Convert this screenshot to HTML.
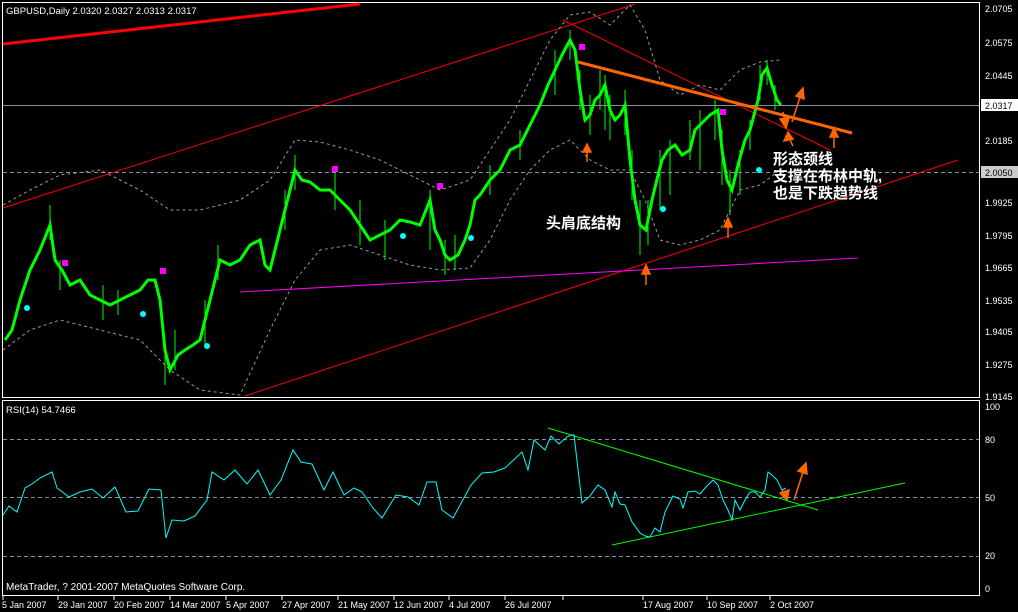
<!DOCTYPE html><html><head><meta charset="utf-8"><style>
body{margin:0;background:#000;width:1018px;height:612px;overflow:hidden}
svg{display:block}
text{font-family:"Liberation Sans",sans-serif;font-size:9px;fill:#fff}
.t{font-size:9.5px}
.m{font-size:10px}
.cn{font-family:"Liberation Sans","Noto Sans CJK SC",sans-serif;font-size:15px;font-weight:bold;fill:#fff}
</style></head><body>
<svg width="1018" height="612" viewBox="0 0 1018 612">
<rect width="1018" height="612" fill="#000"/>
<rect x="2.5" y="2.5" width="977" height="395" fill="none" stroke="#fff"/>
<rect x="2.5" y="400.5" width="977" height="195" fill="none" stroke="#fff"/>
<line x1="3" y1="105.5" x2="979" y2="105.5" stroke="#8090a8"/>
<line x1="3" y1="172.5" x2="979" y2="172.5" stroke="#8090a8" stroke-dasharray="4,3"/>
<line x1="3" y1="44" x2="360" y2="4" stroke="#f00" stroke-width="3"/>
<line x1="3" y1="208" x2="635" y2="4" stroke="#f00"/>
<line x1="245" y1="396" x2="958" y2="160" stroke="#f00"/>
<line x1="563" y1="20" x2="830" y2="150" stroke="#f00"/>
<line x1="240" y1="292" x2="858" y2="258" stroke="#f0f"/>
<polyline fill="none" stroke="#999" stroke-dasharray="3,3" points="3,205 30,190 60,175 100,170 140,190 170,210 200,210 240,200 270,180 295,140 320,142 350,150 380,160 410,175 440,190 470,180 490,150 510,120 530,80 550,40 570,15 590,12 610,25 630,5 645,30 660,80 680,95 700,85 720,90 740,70 760,62 780,60"/>
<polyline fill="none" stroke="#999" stroke-dasharray="3,3" points="3,350 30,330 60,320 100,330 140,340 170,370 200,390 240,395 270,330 295,280 320,250 350,245 380,255 410,265 440,270 470,268 490,240 510,200 530,170 550,150 570,140 590,160 610,170 630,170 645,200 660,240 680,245 700,240 720,230 740,190 760,185 780,170"/>
<g stroke="#00ff00" fill="none">
<polyline stroke-width="3" points="5,340 12,330 20,300 30,270 40,250 50,225 55,260 62,270 70,285 80,280 90,295 100,300 110,305 120,300 130,295 140,290 148,280 155,280 160,300 165,350 170,370 178,355 185,350 193,345 200,340 205,320 210,300 215,280 220,260 230,265 240,260 250,245 260,240 265,265 270,270 275,250 280,230 285,210 290,190 295,170 302,180 310,182 320,190 330,190 340,200 350,210 360,225 370,240 380,235 390,230 400,220 410,222 420,225 430,200 435,230 440,240 445,255 450,260 458,255 465,240 470,225 475,200 480,195 490,180 500,170 510,150 520,145 530,125 540,105 548,85 555,70 562,55 570,40 575,50 580,90 585,120 590,115 595,100 600,95 605,85 610,110 615,120 620,115 625,105 630,160 635,200 640,225 646,230 652,200 658,175 662,160 668,150 675,145 682,155 690,150 695,130 700,125 710,115 718,110 722,150 727,180 732,190 738,165 745,140 750,130 758,100 762,75 767,68 772,85 777,100 781,105"/>
<path stroke-width="1" d="M50,205V240M60,260V290M103,285V320M118,290V315M165,340V385M175,330V370M205,300V345M218,245V280M285,190V230M295,155V190M335,170V210M360,200V245M385,220V260M430,190V250M445,240V275M455,235V270M490,165V195M520,130V160M555,50V95M570,30V60M580,70V110M590,95V135M600,70V110M605,75V130M610,95V140M625,90V135M632,150V200M640,200V255M648,200V245M660,150V210M670,140V195M690,120V160M700,110V170M715,100V140M722,130V185M730,170V215M740,150V195M750,120V150M760,65V100M767,60V85M775,85V110"/>
</g>
<g fill="#f0f"><rect x="62" y="260" width="6" height="6"/><rect x="160" y="268" width="6" height="6"/><rect x="332" y="166" width="6" height="6"/><rect x="437" y="183" width="6" height="6"/><rect x="579" y="44" width="6" height="6"/><rect x="720" y="109" width="6" height="6"/></g>
<g fill="#0ff"><circle cx="27" cy="308" r="3"/><circle cx="143" cy="314" r="3"/><circle cx="207" cy="346" r="3"/><circle cx="403" cy="236" r="3"/><circle cx="471" cy="238" r="3"/><circle cx="663" cy="209" r="3"/><circle cx="759" cy="170" r="3"/></g>
<line x1="578" y1="62" x2="852" y2="133" stroke="#ff6600" stroke-width="3"/>
<g stroke="#ff6600" fill="#ff6600" stroke-width="1.5">
<line x1="587" y1="162" x2="587" y2="150"/><path d="M583,152L587,144L591,152Z"/>
<line x1="646" y1="285" x2="646" y2="272"/><path d="M642,274L646,265L650,274Z"/>
<line x1="728" y1="238" x2="728" y2="225"/><path d="M724,227L728,218L732,227Z"/>
<line x1="834" y1="148" x2="834" y2="135"/><path d="M830,137L834,128L838,137Z"/>
<line x1="783" y1="112" x2="785" y2="122"/><path d="M780,119L786,128L789,118Z"/>
<line x1="793" y1="146" x2="789" y2="138"/><path d="M784,141L788,132L793,139Z"/>
<line x1="792" y1="122" x2="800" y2="97"/><path d="M796,96L803,88L804,99Z"/>
<line x1="787" y1="500" x2="782" y2="490"/><path d="M780,493L787,500L789,490Z"/>
<line x1="794" y1="500" x2="803" y2="472"/><path d="M798,471L806,463L807,474Z"/>
</g>
<text class="cn" x="546" y="228">头肩底结构</text>
<text class="cn" x="773" y="164">形态颈线</text>
<text class="cn" x="773" y="181">支撑在布林中轨,</text>
<text class="cn" x="773" y="198">也是下跌趋势线</text>
<text class="t" x="6" y="14">GBPUSD,Daily  2.0320 2.0327 2.0313 2.0317</text>
<g>
<text x="985" y="12">2.0705</text><text x="985" y="46">2.0575</text><text x="985" y="79">2.0445</text>
<text x="985" y="144">2.0185</text><text x="985" y="206">1.9925</text><text x="985" y="239">1.9795</text>
<text x="985" y="271">1.9665</text><text x="985" y="304">1.9535</text><text x="985" y="335">1.9405</text>
<text x="985" y="368">1.9275</text><text x="985" y="400">1.9145</text>
<rect x="981" y="99" width="37" height="12" fill="#fff"/><text x="985" y="109" style="fill:#000">2.0317</text>
<rect x="981" y="166" width="37" height="12" fill="#ccc"/><text x="985" y="176" style="fill:#000">2.0050</text>
</g>
<g stroke="#8090a8" stroke-dasharray="4,3"><line x1="3" y1="439.5" x2="979" y2="439.5"/><line x1="3" y1="497.5" x2="979" y2="497.5"/><line x1="3" y1="556.5" x2="979" y2="556.5"/></g>
<text class="t" x="6" y="413">RSI(14) 54.7466</text>
<text x="985" y="410">100</text><text x="985" y="443">80</text><text x="985" y="501">50</text><text x="985" y="559">20</text><text x="985" y="592">0</text>
<line x1="548" y1="428" x2="818" y2="510" stroke="#00ff00"/>
<line x1="612" y1="545" x2="905" y2="483" stroke="#00ff00"/>
<polyline fill="none" stroke="#00ffff" points="3,515 9,506 17,512 25,488 32,484 40,478 52,472 57,488 69,497 80,492 92,489 103,498 115,487 126,512 138,511 149,489 161,490 166,538 172,520 184,521 195,516 207,500 212,472 224,480 235,470 247,484 258,470 270,495 281,480 293,450 301,462 312,464 324,490 333,472 344,495 354,488 362,492 373,508 382,518 396,495 408,497 419,505 427,482 436,482 442,510 453,518 471,485 482,473 494,472 505,468 522,452 528,470 534,440 545,450 551,436 559,444 567,437 571,435 574,435 582,503 590,496 598,485 605,490 612,507 615,492 620,504 625,505 632,522 640,533 645,536 650,537 655,528 660,532 665,512 673,496 680,499 683,508 688,492 695,491 700,494 705,488 710,483 713,480 718,485 723,500 728,510 732,520 735,500 740,510 745,500 750,492 755,492 760,497 765,490 768,472 772,475 777,480 782,490 786,488"/>
<text class="m" x="6" y="590">MetaTrader, ? 2001-2007 MetaQuotes Software Corp.</text>
<g stroke="#fff"><path d="M3,596v4M58,596v4M114,596v4M170,596v4M226,596v4M282,596v4M338,596v4M394,596v4M449,596v4M505,596v4M563,596v4M643,596v4M707,596v4M770,596v4"/></g>
<text x="2" y="608">5 Jan 2007</text><text x="58" y="608">29 Jan 2007</text><text x="114" y="608">20 Feb 2007</text><text x="170" y="608">14 Mar 2007</text><text x="226" y="608">5 Apr 2007</text><text x="282" y="608">27 Apr 2007</text><text x="338" y="608">21 May 2007</text><text x="394" y="608">12 Jun 2007</text><text x="449" y="608">4 Jul 2007</text><text x="505" y="608">26 Jul 2007</text><text x="643" y="608">17 Aug 2007</text><text x="707" y="608">10 Sep 2007</text><text x="770" y="608">2 Oct 2007</text>
</svg>
</body></html>
